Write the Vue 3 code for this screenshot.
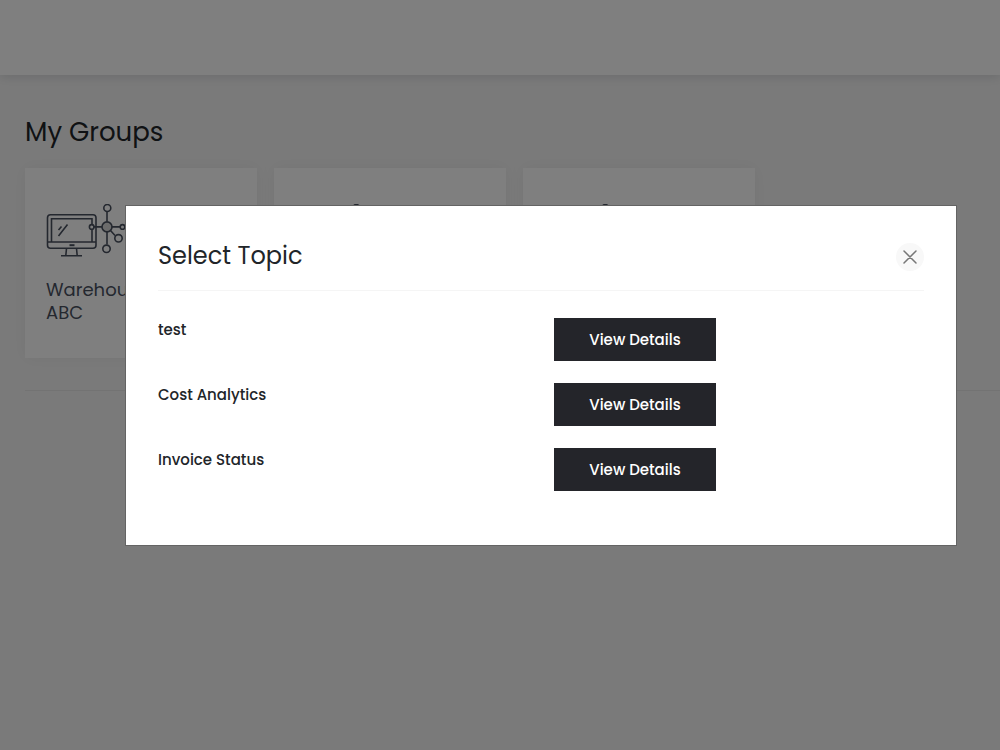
<script setup>
const cards = [{ id: 1, label: 'Warehouse ABC' }, { id: 2 }, { id: 3 }]
const topics = ['test', 'Cost Analytics', 'Invoice Status']
</script>

<template>
  <div class="page">
    <header class="topbar"></header>
    <main class="content">
      <h1 class="title">My Groups</h1>
      <section class="cards">
        <article v-for="card in cards" :key="card.id" class="card">
          <svg class="icon" viewBox="0 0 80 54" fill="none" stroke="currentColor" stroke-width="1.6" aria-hidden="true">
            <rect x="1.500" y="10.800" width="48.500" height="33.500" rx="3" />
            <path d="M1.500 38h48.500M5.500 38V14.800h40.500V21M46 26v12M20.500 44.500l-.7 7M30.500 44.500l.7 7M15 51.700h21" />
            <path d="M23.500 41.200h5" stroke-width="2" />
            <path d="M12.500 32l9-11.500M12.500 26l3-3.500" />
            <path d="M61 7.500v10M61 27.500v13M47.500 22.900h8.500M66 22.900h8M64.500 26.500l4.500 5" />
            <circle cx="61.300" cy="4" r="3.500" />
            <circle class="hub" cx="61" cy="22.900" r="5" />
            <circle cx="45.700" cy="22.900" r="2.300" />
            <circle cx="76.500" cy="22.900" r="2.300" />
            <circle cx="72.500" cy="34.300" r="3.700" />
            <circle cx="60.500" cy="44.800" r="3.700" />
          </svg>
          <p v-if="card.label" class="label">{{ card.label }}</p>
        </article>
      </section>
      <hr class="rule" />
    </main>

    <div class="overlay">
      <div class="dialog" role="dialog" aria-modal="true" aria-labelledby="dialog-title">
        <div class="dialog-head">
          <h2 id="dialog-title" class="dialog-title">Select Topic</h2>
          <button class="close" type="button" aria-label="Close">
            <svg viewBox="0 0 14 14" width="14" height="14" fill="none" stroke="currentColor" stroke-width="1.5" stroke-linecap="round" aria-hidden="true">
              <path d="M1 1l12 12M13 1L1 13" />
            </svg>
          </button>
        </div>
        <ul class="topics">
          <li v-for="topic in topics" :key="topic" class="topic">
            <span class="name">{{ topic }}</span>
            <button class="view" type="button">View Details</button>
          </li>
        </ul>
      </div>
    </div>
  </div>
</template>

<style>
body {
  background: #f5f5f5;
}
</style>

<style scoped>
.page {
  min-height: 100vh;
  background: #f5f5f5;
  font-family: Poppins, Inter, "Open Sans", sans-serif;
  color: #212529;
}
.topbar {
  height: 75px;
  background: #fff;
  box-shadow: 0 2px 10px rgba(60, 70, 80, 0.16);
}
.content {
  padding: 38px 0 0 25px;
}
.title {
  margin: 0 0 17px;
  font-size: 26px;
  font-weight: 400;
  line-height: 38px;
}
.cards {
  display: grid;
  grid-template-columns: repeat(3, 232px);
  gap: 17px;
}
.card {
  box-sizing: border-box;
  min-height: 190px;
  padding: 36px 21px 32px;
  background: #fff;
  box-shadow: 0 0 16px rgba(0, 0, 0, 0.05);
  color: #49505f;
}
.icon {
  display: block;
  width: 80px;
  height: 54px;
}
.hub {
  fill: #d8d8d8;
}
.label {
  width: 120px;
  margin: 20px 0 0;
  font-size: 18px;
  font-weight: 400;
  line-height: 23px;
}
.rule {
  margin: 32px 0 0;
  border: 0;
  border-top: 1px solid #e6e6e6;
}
.overlay {
  position: fixed;
  inset: 0;
  display: flex;
  align-items: center;
  padding: 0 43px 0 125px;
  background: rgba(0, 0, 0, 0.5);
}
.dialog {
  box-sizing: border-box;
  flex: 1;
  padding: 24px 32px 54px;
  border: 1px solid #646464;
  background: #fff;
}
.dialog-head {
  display: flex;
  align-items: flex-start;
  justify-content: space-between;
  height: 60px;
  border-bottom: 1px solid #f5f5f5;
}
.dialog-title {
  margin: 7px 0 0;
  font-size: 24px;
  font-weight: 400;
  line-height: 38px;
}
.close {
  display: grid;
  place-items: center;
  width: 28px;
  height: 28px;
  margin-top: 13px;
  padding: 0;
  border: 0;
  border-radius: 50%;
  background: #f8f8f8;
  color: #777;
}
.topics {
  display: grid;
  gap: 22px;
  margin: 0;
  padding: 27px 0 0;
  list-style: none;
}
.topic {
  display: grid;
  grid-template-columns: 396px 162px;
  align-items: start;
}
.name {
  font-size: 15px;
  font-weight: 500;
  line-height: 24px;
}
.view {
  height: 43px;
  padding: 1px 0 0;
  border: 0;
  background: #24252a;
  color: #fff;
  font: 500 15px/24px Poppins, Inter, "Open Sans", sans-serif;
}
</style>
